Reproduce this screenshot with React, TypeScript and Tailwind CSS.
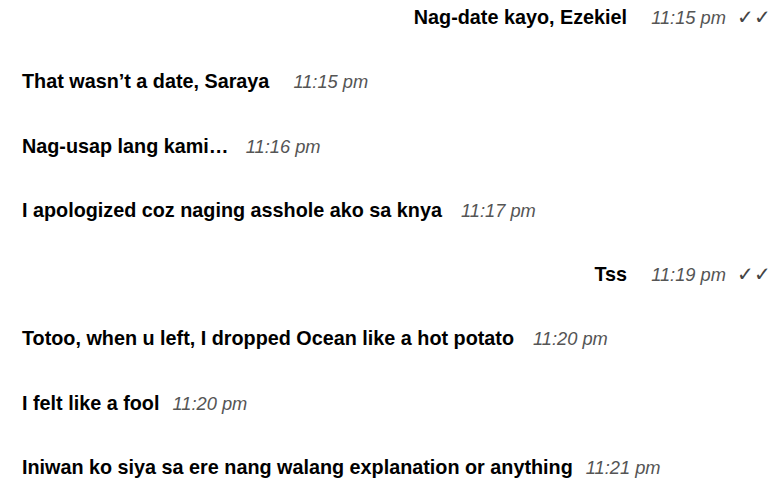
import React from "react";

type Msg = { text: string; time: string; mine?: boolean; gap: string };

const messages: Msg[] = [
  { text: "Nag-date kayo, Ezekiel", time: "11:15 pm", mine: true, gap: "ml-[24px]" },
  { text: "That wasn’t a date, Saraya", time: "11:15 pm", gap: "ml-[24px]" },
  { text: "Nag-usap lang kami…", time: "11:16 pm", gap: "ml-[17px]" },
  { text: "I apologized coz naging asshole ako sa knya", time: "11:17 pm", gap: "ml-[19px]" },
  { text: "Tss", time: "11:19 pm", mine: true, gap: "ml-[24px]" },
  { text: "Totoo, when u left, I dropped Ocean like a hot potato", time: "11:20 pm", gap: "ml-[19px]" },
  { text: "I felt like a fool", time: "11:20 pm", gap: "ml-[13px]" },
  { text: "Iniwan ko siya sa ere nang walang explanation or anything", time: "11:21 pm", gap: "ml-[13px]" },
];

const App = () => {
  return (
    <div className="w-[779px] h-[490px] bg-white overflow-hidden font-['Liberation_Sans',Arial,sans-serif] pt-[5px]">
      {messages.map((m, i) => (
        <div
          key={i}
          className={`h-[64.3px] flex items-baseline ${
            m.mine ? "justify-end pr-[11px]" : "justify-start pl-[22px]"
          }`}
        >
          <span className="text-[19.8px] leading-6 font-bold text-black">{m.text}</span>
          <span className={`${m.gap} text-[18.3px] leading-5 italic text-[#555]`}>{m.time}</span>
          {m.mine && (
            <span className="ml-[11px] w-[31px] inline-flex justify-between text-[20px] leading-5 text-[#444]">
              <span>✓</span>
              <span>✓</span>
            </span>
          )}
        </div>
      ))}
    </div>
  );
};

export default App;
